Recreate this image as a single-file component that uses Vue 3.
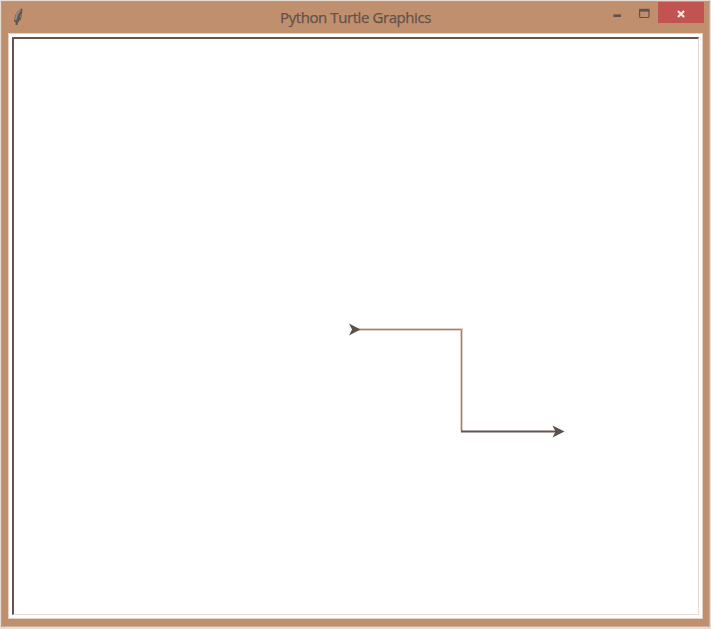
<script setup>
const title = 'Python Turtle Graphics'
</script>

<template>
  <main class="window">
    <header class="titlebar">
      <svg class="feather" width="12" height="20" viewBox="0 0 12 20">
        <path d="M8.5 0.5 L5 3 L2 7.5 L1 13.5 L2.5 14 L2.5 17 L4.5 17 L5 14.5 L8 11 L9 7 L9.3 1 Z" fill="#62564f" />
        <path d="M7.2 2 L4 6.5 L2.4 12" fill="none" stroke="#918d8b" stroke-width="1.9" />
        <path d="M8.5 6 L7 10" fill="none" stroke="#8b8581" stroke-width="1" />
      </svg>
      <h1 class="title">{{ title }}</h1>
      <div class="controls">
        <svg class="glyph" width="48" height="22" viewBox="0 0 48 22">
          <path d="M3.4 13.7 H11" stroke="#62524c" stroke-width="2.6" stroke-linecap="butt" />
          <rect x="29.6" y="7.6" width="9.4" height="7.9" rx="1" fill="none" stroke="#62524c" stroke-width="1.2" />
          <path d="M29.2 8.2 H39.4" stroke="#62524c" stroke-width="2.8" />
        </svg>
        <button class="close" aria-label="Close">
          <svg width="8" height="8" viewBox="0 0 8 8">
            <path d="M0.9 0.9 L7.1 7.1 M7.1 0.9 L0.9 7.1" stroke="#f5e8df" stroke-width="2.1" />
          </svg>
        </button>
      </div>
    </header>
    <section class="frame">
      <div class="canvas">
        <svg class="drawing" width="685" height="574" viewBox="14 39 685 574">
          <path d="M692.5 50 V610" stroke="#f3eeeb" stroke-width="1" stroke-dasharray="1 11" />
          <path d="M358 329.5 H461.5 V431" fill="none" stroke="#e0d2c8" stroke-width="3" />
          <path d="M358 329.5 H461.5 V431" fill="none" stroke="#94857c" stroke-width="1" />
          <path d="M461 431.4 H556" stroke="#62544e" stroke-width="2" />
          <path d="M349 323.5 L360.5 329.5 L349 335.5 L352 329.5 Z" fill="#5e514b" />
          <path d="M552.5 425.5 L564.5 431.5 L552.5 437.5 L555.5 431.5 Z" fill="#5e514b" />
        </svg>
      </div>
    </section>
  </main>
</template>

<style>
body {
  margin: 0;
  background: #f0e8e2;
}
</style>

<style scoped>
.window {
  box-sizing: border-box;
  width: 711px;
  height: 629px;
  display: flex;
  flex-direction: column;
  background: #c08f6e;
  border: 1px solid #e8ddd5;
  border-bottom-width: 2px;
  box-shadow: inset 1px 1px #b89a84, inset -1px -1px #c9b09f;
}
.titlebar {
  height: 32px;
  flex: none;
  display: grid;
  grid-template-columns: 110px 1fr 110px;
  align-items: start;
}
.feather {
  margin: 7px 0 0 12px;
}
.title {
  margin: 6px 0 0;
  text-align: center;
  font: 400 15px/20px "Open Sans", "Noto Sans", sans-serif;
  letter-spacing: -0.42px;
  color: #62524c;
  -webkit-text-stroke: 0.25px #62524c;
  white-space: nowrap;
}
.controls {
  display: flex;
  margin-top: 1px;
}
.glyph {
  flex: none;
  margin-left: 10px;
}
.close {
  flex: none;
  width: 46px;
  height: 21px;
  padding: 2px 0 0;
  border: 0;
  display: flex;
  align-items: center;
  justify-content: center;
  background: #c15450;
}
.frame {
  box-sizing: border-box;
  width: 695px;
  height: 586px;
  margin-left: 7px;
  padding: 3px;
  background: #fff;
  border: 1px solid #e3d1c4;
}
.canvas {
  box-sizing: border-box;
  height: 578px;
  border-top: 2px solid #62554f;
  border-left: 2px solid #62554f;
  border-right: 1px solid #e7dcd5;
  border-bottom: 1px solid #e7dcd5;
  background: #fff;
}
.drawing {
  display: block;
}
</style>
